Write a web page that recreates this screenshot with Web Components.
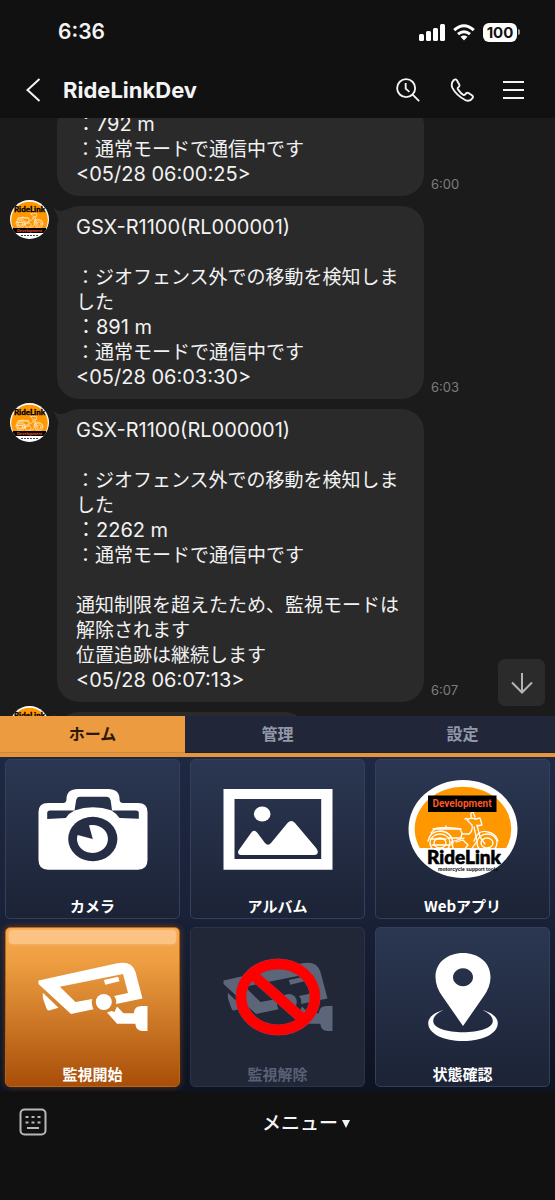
<!DOCTYPE html>
<html lang="ja">
<head>
<meta charset="utf-8">
<meta name="viewport" content="width=device-width, initial-scale=1">
<title>RideLinkDev</title>
<style>
  html, body { margin: 0; height: 100%; background: #111; }
  body {
    font-family: Inter, "Noto Sans CJK JP", sans-serif;
    color: #f4f4f4;
  }
</style>
</head>
<body>
<chat-screen>
  <status-bar slot="top" time="6:36" battery="100"></status-bar>
  <chat-header slot="top">RideLinkDev</chat-header>

  <chat-log start="21">
    <chat-message time="6:00" grouped><span>：792 m</span>
：通常モードで通信中です
<span>&lt;05/28 06:00:25&gt;</span></chat-message>
    <chat-message time="6:03"><span>GSX-R1100(RL000001)</span>

：ジオフェンス外での移動を検知しました
<span>：891 m</span>
：通常モードで通信中です
<span>&lt;05/28 06:03:30&gt;</span></chat-message>
    <chat-message time="6:07"><span>GSX-R1100(RL000001)</span>

：ジオフェンス外での移動を検知しました
<span>：2262 m</span>
：通常モードで通信中です

通知制限を超えたため、監視モードは解除されます
位置追跡は継続します
<span>&lt;05/28 06:07:13&gt;</span></chat-message>
    <chat-message short></chat-message>
  </chat-log>

  <rich-menu slot="bottom">
    <menu-tab slot="tabs" active>ホーム</menu-tab>
    <menu-tab slot="tabs">管理</menu-tab>
    <menu-tab slot="tabs">設定</menu-tab>
    <menu-tile icon="camera">カメラ</menu-tile>
    <menu-tile icon="album">アルバム</menu-tile>
    <menu-tile icon="logo">Webアプリ</menu-tile>
    <menu-tile icon="cctv" variant="primary">監視開始</menu-tile>
    <menu-tile icon="cctvOff" variant="off">監視解除</menu-tile>
    <menu-tile icon="pin">状態確認</menu-tile>
  </rich-menu>
  <input-bar slot="bottom">メニュー</input-bar>
</chat-screen>

<script>
// side view of the bike, shared by the avatar and the web app badge
const BIKE = `
  <g fill="none" stroke="#fff" stroke-width="1.3" stroke-linejoin="round" stroke-linecap="round">
    <ellipse cx="32" cy="64" rx="10" ry="9"/>
    <ellipse cx="32" cy="64" rx="6" ry="5"/>
    <ellipse cx="79" cy="64" rx="10" ry="9"/>
    <ellipse cx="79" cy="64" rx="6" ry="5"/>
    <path d="M20 62q2-10 13-10 11 1 12 13"/>
    <path d="M23 54l4-4h25l2 4-1 5H40"/>
    <path d="M25 50q11-3 28 0M38 49v-2"/>
    <path d="M54 55h7q4-3 3-9l-5-5 4-2 5 1 4-1 2 7-5 1"/>
    <path d="M60 40q-2-1-3 0M63 38v-4l2-1 2 5"/>
    <path d="M69 46l3 12 5 7M66 48l3 14-6 9H46l-3-8 13-4"/>
    <path d="M66 62q4-12 14-9 8 2 10 9"/>
    <path d="M48 63l7-2 5 5-4 5M24 66h18M22 60h16"/>
  </g>`;

const CCTV = `
  <path d="M.5 33.5L78 16.500Q94 13 97.500 25L104.500 51.500 78 57Q79 52.500 76 49L90 46 85 27 21.800 39.700 37.500 55 54.200 52Q53 57 55.500 62.300L33 67 .5 37z"/>
  <path d="M65.800 33l14.400-3.300 1.300 4.600-14.200 3.400z"/>
  <path d="M4.800 45.700L20.500 60.700 12 63.200Q9.500 64 8.500 61.500L5.500 53Q4.500 50 4.800 45.700z"/>
  <circle cx="65.800" cy="55" r="8"/>
  <path d="M79 59.500l6.500 6.800h10.300q.5-7.300 7.700-7.300h6v25h-5q-6.500 0-7.200-7.300H79L69 65.500l4.500-1.500 3 1z"/>`;

const ICONS = {
  camera: `
    <path fill="#fff" fill-rule="evenodd" d="M10 24H25Q28.500 24 28.500 20 28.500 10 40 10H70Q81.500 10 81.500 20 81.500 24 85 24H100Q109.500 24 109.500 33V81Q109.500 90.700 100 90.700H10Q.5 90.700.5 81V33Q.5 24 10 24z
      M36.500 31.500Q54.800 25 74 31.500L72.800 22Q72 17.700 68 17.700H42Q38.500 17.700 38 22z
      M36.500 31.500H12Q9.200 31.500 9.200 34V40L27.800 39Q31 34 36.500 31.500z
      M73.500 31.500H98Q100.800 31.500 100.800 34V39.800L81.500 39Q78.500 34.500 73.500 31.500z"/>
    <ellipse cx="54.800" cy="60" rx="24.600" ry="22.200" fill="#252e45"/>
    <path fill="#fff" d="M54.800 60L51 46.300A15.500 14 0 1 1 39.600 56z"/>`,
  album: `
    <path fill="#fff" fill-rule="evenodd" d="M.5 10H109.500V90.700H.5zM11.500 20V80H98.200V20z"/>
    <g fill="#fff">
      <ellipse cx="39.200" cy="35" rx="8.300" ry="7.500"/>
      <path d="M18 76Q14 75.500 15.500 71.500L28 54Q31 49.500 34.500 54L42 64Q45 67.300 48 64L64.500 44Q68.200 40 72 44L93.500 69.500Q97 75.500 91 76z"/>
    </g>`,
  logo: `
    <clipPath id="disc"><path d="M0 0H110V69H0z"/></clipPath>
    <ellipse cx="55" cy="50" rx="54.500" ry="49" fill="#fff"/>
    <ellipse cx="55" cy="50" rx="48.300" ry="42.300" fill="#ff9800" clip-path="url(#disc)"/>
    ${BIKE}
    <path d="M20 16.500H88.500V33H20z"/>
    <text x="54" y="28" text-anchor="middle" font-family="Roboto, sans-serif" font-weight="700" font-size="10" fill="#ff5722">Development</text>
    <text x="56" y="85" text-anchor="middle" font-family="Lato, sans-serif" font-weight="900" font-size="19" fill="#000" stroke="#000" stroke-width=".6">RideLink</text>
    <text x="60" y="92" text-anchor="middle" font-family="Liberation Sans, sans-serif" font-weight="700" font-size="5" fill="#000">motorcycle support tools</text>`,
  cctv: `<g fill="#fff">${CCTV}</g>`,
  cctvOff: `
    <g fill="#5d6579">${CCTV}</g>
    <g fill="none" stroke="#a8324a" stroke-width="11">
      <ellipse cx="55" cy="50" rx="37" ry="33"/><path d="M29 27L81 73"/>
    </g>
    <g fill="none" stroke="#f00" stroke-width="10">
      <ellipse cx="55" cy="50" rx="37" ry="33"/><path d="M29 27L81 73"/>
    </g>`,
  pin: `
    <path fill="#fff" fill-rule="evenodd" d="M55 79L34.500 49.500Q27.500 40 27.500 30C27.500 15 40 6 55 6S82.500 15 82.500 30Q82.500 40 75.500 49.500z
      M55 21.300a10 9 0 1 0 .01 0z"/>
    <path fill="#fff" d="M35.500 63C25 66 20.200 71 20.200 76 20.200 87 36 94 55 94S89.800 87 89.800 76C89.800 71 85 66 74.500 63 81 66 84.800 69.500 84.800 74 84.800 81 71 85.300 55 85.300S25.200 81 25.200 74C25.200 69.500 29 66 35.500 63z"/>`,
};

class BaseElement extends HTMLElement {
  constructor() {
    super();
    this.attachShadow({ mode: 'open' });
  }
  connectedCallback() {
    this.shadowRoot.innerHTML = `<style>
      :host, * { box-sizing: border-box; }
      svg { display: block; }
      button { margin: 0; padding: 0; border: 0; background: none; color: inherit; font: inherit; cursor: pointer; }
      ${this.css()}
    </style>${this.html()}`;
  }
}

customElements.define('chat-screen', class extends BaseElement {
  css() {
    return `
      :host { display: flex; flex-direction: column; height: 100vh; overflow: hidden; }
      header, footer { flex: none; }
      main { flex: 1; min-height: 0; display: flex; }
    `;
  }
  html() {
    return `<header><slot name="top"></slot></header>
      <main><slot></slot></main>
      <footer><slot name="bottom"></slot></footer>`;
  }
});

customElements.define('status-bar', class extends BaseElement {
  css() {
    return `
      :host { display: flex; align-items: center; justify-content: space-between; height: 62px; padding: 2px 35px 0 58px; background: #111; }
      .time { font-size: 21px; font-weight: 600; line-height: 24px; }
      .icons { display: flex; align-items: center; gap: 8px; }
      .battery { display: flex; align-items: center; gap: 1px; }
      .level { width: 34px; border-radius: 6px; background: #fff; color: #111; font-size: 15px; font-weight: 700; line-height: 19px; text-align: center; }
      .nub { width: 2px; height: 6px; border-radius: 0 2px 2px 0; background: #999; }
    `;
  }
  html() {
    return `
      <span class="time">${this.getAttribute('time')}</span>
      <div class="icons">
        <svg width="26" height="17" viewBox="0 0 26 17" fill="#fff">
          <rect y="10" width="5" height="7" rx="1.500"/><rect x="7" y="7" width="5" height="10" rx="1.500"/>
          <rect x="14" y="4" width="5" height="13" rx="1.500"/><rect x="21" width="5" height="17" rx="1.500"/>
        </svg>
        <svg width="22" height="17" viewBox="0 0 22 17" fill="none" stroke="#fff" stroke-width="3">
          <path d="M1.200 6.200Q11-2.800 20.800 6.200M5 10.200q6-5 12 0"/>
          <path d="M11 16.500l-3.500-3.700q3.500-2.600 7 0z" fill="#fff" stroke="none"/>
        </svg>
        <div class="battery"><span class="level">${this.getAttribute('battery')}</span><span class="nub"></span></div>
      </div>`;
  }
});

customElements.define('chat-header', class extends BaseElement {
  css() {
    return `
      :host { display: flex; align-items: center; height: 56px; padding: 0 30px 0 24px; background: #111; }
      h1 { flex: 1; margin: 0 0 0 19px; font-size: 22px; line-height: 28px; font-weight: 700; }
      nav { display: flex; gap: 28px; }
      svg { fill: none; stroke: #f4f4f4; stroke-width: 2; }
    `;
  }
  html() {
    return `
      <button aria-label="戻る"><svg width="20" height="26" viewBox="0 0 20 26"><path d="M15.500 2L3.500 13l12 11"/></svg></button>
      <h1><slot></slot></h1>
      <nav>
        <button aria-label="検索"><svg width="26" height="26" viewBox="0 0 28 28"><circle cx="12" cy="12" r="9.700"/><path d="M19 19l7 7M11.500 6.500v6l4 3.500"/></svg></button>
        <button aria-label="通話"><svg width="26" height="26" viewBox="0 0 28 28" stroke-linejoin="round"><path d="M5 3.500Q7 1.500 8.500 3.500L11 8Q11.800 9.500 10.500 10.700L9.500 11.700Q9 12.500 9.800 13.600 12.500 17.500 15.500 19.300 16.500 19.700 17.200 18.900L18.500 17.500Q19.800 16.500 21 17.300L25 20Q26.500 21.300 25.200 22.800 22.500 27 17.500 24.800 8 20 3.500 11.500 1.800 6.800 5 3.500z"/></svg></button>
        <button aria-label="メニュー"><svg width="22" height="26" viewBox="0 0 22 26"><path d="M0 5h21M0 13h21M0 21h21"/></svg></button>
      </nav>`;
  }
});

customElements.define('chat-log', class extends BaseElement {
  css() {
    return `
      :host { position: relative; display: flex; flex: 1; min-width: 0; background: #1b1b1b; }
      .log { flex: 1; display: flex; flex-direction: column; gap: 4px; overflow-y: auto; scrollbar-width: none; }
      .jump { position: absolute; right: 10px; bottom: 10px; width: 47px; height: 47px; border-radius: 7px; background: #2b2b2b; display: grid; place-items: center; }
    `;
  }
  html() {
    return `<div class="log"><slot></slot></div>
      <button class="jump" aria-label="最新へ">
        <svg width="24" height="24" viewBox="0 0 24 24" fill="none" stroke="#b4b4b4" stroke-width="2"><path d="M12 2v19M2 11.500l10 10 10-10"/></svg>
      </button>`;
  }
  connectedCallback() {
    super.connectedCallback();
    // messages upgrade after this element, so wait for the full page
    addEventListener('DOMContentLoaded', () => {
      this.shadowRoot.querySelector('.log').scrollTop = Number(this.getAttribute('start'));
    });
  }
});

customElements.define('rl-avatar', class extends BaseElement {
  css() {
    return `:host { display: block; width: 39px; height: 39px; } svg { width: 100%; height: 100%; }`;
  }
  html() {
    return `<svg viewBox="0 0 39 39">
      <clipPath id="c"><circle cx="19.500" cy="19.500" r="19.500"/></clipPath>
      <g clip-path="url(#c)">
        <path fill="#fff" d="M0 0h39v39H0z"/>
        <path fill="#ff9800" d="M1.200 20a18.300 18.300 0 0 1 36.600 0q0 4-1.800 8.500H3Q1.200 24 1.200 20z"/>
        <g transform="translate(-2 -4) scale(.39 .44)">${BIKE}</g>
        <path d="M3 28h33v5H3z"/>
        <text x="19.500" y="32" text-anchor="middle" font-family="Liberation Sans, sans-serif" font-weight="700" font-size="4" fill="#ff5722">Development</text>
        <text x="19.500" y="12" text-anchor="middle" font-family="Lato, sans-serif" font-weight="900" font-size="8" stroke="#000" stroke-width=".3">RideLink</text>
        <path stroke="#444" stroke-dasharray="2 1" d="M11 35.500h17"/>
      </g>
    </svg>`;
  }
});

customElements.define('chat-message', class extends BaseElement {
  css() {
    return `
      :host { display: flex; flex: none; align-items: flex-start; gap: 8px; padding: 0 96px 0 10px; }
      .side { flex: none; width: 39px; }
      .bubble { position: relative; flex: 1; min-width: 0; min-height: 60px; margin-top: 6px; padding: 9px 19px; border-radius: 22px; background: #2a2a2a; color: #f2f2f2; font-size: 19px; line-height: 25px; white-space: pre-line; }
      :host([short]) .bubble { flex: 0 1 250px; }
      /* latin runs are set a step larger than the kana */
      ::slotted(span) { font-size: 20px; line-height: 24px; }
      .tail { position: absolute; left: -4px; top: 1px; }
      time { flex: none; align-self: flex-end; width: 28px; margin: 0 0 4px -1px; color: #7d7d7d; font-size: 13px; line-height: 16px; white-space: nowrap; }
    `;
  }
  html() {
    const grouped = this.hasAttribute('grouped');
    const time = this.getAttribute('time');
    return `<div class="side">${grouped ? '' : '<rl-avatar></rl-avatar>'}</div>
      <div class="bubble">${grouped ? '' : '<svg class="tail" width="18" height="14" viewBox="0 0 18 14"><path fill="#2a2a2a" d="M0 0q5 6 12 3l6-1L6 14Q4 7 0 0z"/></svg>'}<slot></slot></div>
      ${time ? `<time>${time}</time>` : ''}`;
  }
});

customElements.define('rich-menu', class extends BaseElement {
  css() {
    return `
      :host { display: block; background: linear-gradient(#202a45, #1a2239 50%, #0e1322); font-family: "Noto Sans CJK JP", sans-serif; }
      .tabs { display: flex; border-bottom: 4px solid #e6953c; }
      .grid { display: grid; grid-template-columns: repeat(3, 1fr); gap: 8px 10px; padding: 2px 5px 4px; }
    `;
  }
  html() {
    return `<div class="tabs" role="tablist"><slot name="tabs"></slot></div>
      <div class="grid"><slot></slot></div>`;
  }
});

customElements.define('menu-tab', class extends BaseElement {
  css() {
    return `
      :host { display: flex; flex: 1; }
      button { flex: 1; height: 37px; padding-bottom: 2px; border-bottom: 1px solid #1b2133; background: #212738; color: #9398a9; font-size: 16px; font-weight: 700; line-height: 24px; }
      :host([active]) button { background: #ec9b41; color: #2a1808; border-color: #cf8738; }
    `;
  }
  html() {
    return `<button role="tab" aria-selected="${this.hasAttribute('active')}"><slot></slot></button>`;
  }
});

customElements.define('menu-tile', class extends BaseElement {
  css() {
    return `
      :host { display: flex; min-width: 0; }
      button {
        position: relative; flex: 1; display: flex; flex-direction: column; align-items: center; gap: 17px;
        height: 160px; padding-top: 19px; border: 1px solid #34405a; border-radius: 5px;
        background: linear-gradient(#2b3752, #1c2336); color: #fff;
        font-size: 15px; font-weight: 700; line-height: 20px;
      }
      :host([variant="primary"]) button {
        border-color: #b8651a; background: linear-gradient(#f7a94c, #ef9f42 20%, #a84e09);
        box-shadow: 0 0 6px #a8560e88;
      }
      :host([variant="primary"]) button::before {
        content: ''; position: absolute; top: 2px; left: 3px; right: 3px; height: 14px;
        border-radius: 4px; background: #fcc283; box-shadow: 0 0 3px #fcc283;
      }
      :host([variant="off"]) button { border-color: #2b3346; background: #212736; color: #596176; }
    `;
  }
  html() {
    return `<button ${this.getAttribute('variant') === 'off' ? 'disabled' : ''}>
      <svg width="110" height="100" viewBox="0 0 110 100">${ICONS[this.getAttribute('icon')]}</svg>
      <span><slot></slot></span>
    </button>`;
  }
});

customElements.define('input-bar', class extends BaseElement {
  css() {
    return `
      :host { display: flex; align-items: center; height: 109px; padding: 0 0 47px 19px; background: #111; }
      .menu { flex: 1; display: flex; align-items: center; justify-content: center; gap: 4px; margin-left: 10px; padding-top: 4px; font-size: 19px; font-weight: 500; line-height: 28px; }
    `;
  }
  html() {
    return `
      <button aria-label="キーボード">
        <svg width="28" height="28" viewBox="0 0 28 28" fill="none" stroke="#b8b8b8" stroke-width="2">
          <rect x="1.500" y="1.500" width="25" height="25" rx="4"/>
          <path stroke-dasharray="3 3" d="M6.500 9h15M6.500 14.500h15"/><path d="M8 20h12"/>
        </svg>
      </button>
      <button class="menu"><slot></slot><svg width="8" height="8" viewBox="0 0 8 8" fill="#f4f4f4"><path d="M0 0h8L4 8z"/></svg></button>`;
  }
});
</script>
</body>
</html>
